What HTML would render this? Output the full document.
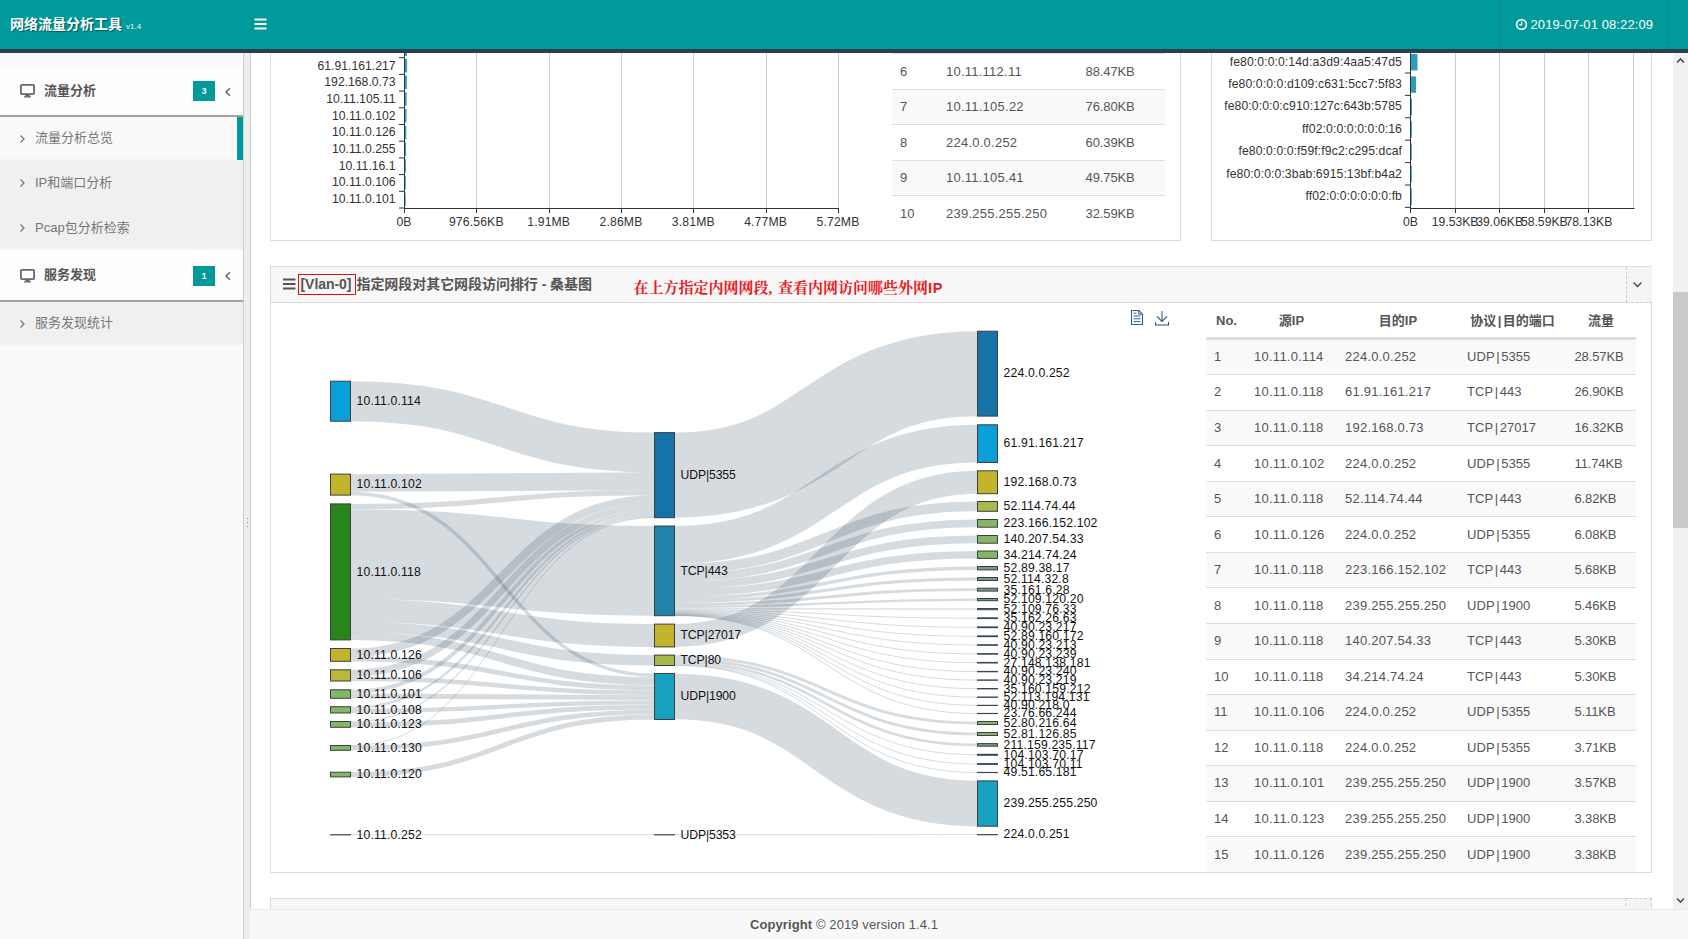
<!DOCTYPE html>
<html lang="zh-CN"><head><meta charset="utf-8"><title>网络流量分析工具</title>
<style>
*{box-sizing:border-box}
html,body{margin:0;padding:0}
body{width:1688px;height:939px;overflow:hidden;position:relative;background:#fff;font-family:"Liberation Sans","Noto Sans CJK SC",sans-serif;font-size:13px;color:#555}
.abs{position:absolute}
#hdr{left:0;top:0;width:1688px;height:53px;background:#019a9a;border-bottom:4px solid #2b3e50;z-index:10}
#hdr .title{left:10px;top:14px;color:#fff;font-weight:bold;font-size:14px;line-height:20px;text-shadow:1px 1px 1px rgba(0,0,0,.45);white-space:nowrap}
#hdr .title small{font-weight:normal;font-size:8px;margin-left:4px;color:#e8f4f4;text-shadow:none}
#side{left:0;top:53px;width:243px;height:886px;background:#fafafa}
.mh{left:0;width:243px;background:#fdfdfd;border-bottom:2px solid #a2a2a2;font-weight:bold;color:#555;font-size:13px}
.mh .t{left:44px;white-space:nowrap}
.badge{left:193px;width:22px;height:20px;background:#019a9a;color:#fff;font-size:8.5px;font-weight:bold;text-align:center;line-height:21px}
.mi{left:0;width:243px;background:#f0f0f0;color:#777;font-size:13px;border-bottom:1px solid #f4f4f4}
.mi .t{left:35px;white-space:nowrap}
#split{left:243px;top:53px;width:8px;z-index:3;height:886px;background:#eceeed;border-left:1px solid #cdcdcd;border-right:1px solid #cfcfcf}
#main{left:250px;top:53px;width:1423px;height:856px;overflow:hidden;background:#fff}
.panel{border:1px solid #ddd;background:#fff}
.tr{position:absolute;left:0;width:273px;border-top:1px solid #ddd;color:#555;font-size:13px}
.tr span{position:absolute;top:calc(50% + .6px);transform:translateY(-50%);white-space:nowrap;line-height:16px;letter-spacing:.07px}
.tr2{position:absolute;left:956px;width:430px;border-top:1px solid #ddd;color:#555;font-size:13px}
.tr2 span{position:absolute;top:50%;transform:translateY(-50%);white-space:nowrap;line-height:16px;letter-spacing:.07px}
.tr2 i{font-style:normal;margin:0 1.5px}
.th{position:absolute;font-weight:bold;color:#555;font-size:13px;white-space:nowrap;line-height:16px;transform:translateX(-50%)}
#foot{left:250px;top:909px;letter-spacing:.1px;width:1438px;padding-right:250px;height:30px;background:#f8f8f8;border-top:1px solid #e7eaec;text-align:center;font-size:13px;color:#555;line-height:30px;z-index:5}
#sb{left:1673px;top:53px;width:15px;height:856px;background:#f1f1f1}
</style></head><body>

<div id="hdr" class="abs">
 <div class="title abs">网络流量分析工具<small>v1.4</small></div>
 <svg class="abs" style="left:254px;top:18px" width="14" height="12" viewBox="0 0 14 12"><path d="M0.5 1.5h12M0.5 6h12M0.5 10.5h12" stroke="#fff" stroke-width="2"/></svg>
 <div class="abs" style="left:1500px;top:0;width:1px;height:49px;background:#1b7fb0"></div>
 <div class="abs" style="left:1668px;top:0;width:1px;height:49px;background:#1b7fb0"></div>
 <svg class="abs" style="left:1515px;top:18px" width="13" height="13" viewBox="0 0 13 13"><circle cx="6.5" cy="6.5" r="4.9" fill="none" stroke="#fff" stroke-width="1.7"/><path d="M6.7 3.6v3.2H4.2" fill="none" stroke="#fff" stroke-width="1.2"/></svg>
 <div class="abs" style="left:1530.5px;top:17px;color:#fff;font-size:13px;line-height:16px;letter-spacing:.1px;white-space:nowrap">2019-07-01 08:22:09</div>
</div>

<div id="side" class="abs">
 <div class="mh abs" style="top:13px;height:51px">
  <svg class="abs" style="left:20px;top:18px" width="15" height="14" viewBox="0 0 15 14"><rect x="0.9" y="0.9" width="13.2" height="9.2" rx="1" fill="none" stroke="#666" stroke-width="1.8"/><path d="M5.5 10.5h4l.6 2.2H4.9z" fill="#666"/><rect x="4" y="12.3" width="7" height="1.2" fill="#666"/></svg>
  <span class="t abs" style="top:16px;line-height:18px">流量分析</span>
  <div class="badge abs" style="top:15px">3</div>
  <svg class="abs" style="left:224px;top:21px" width="8" height="10" viewBox="0 0 8 10"><path d="M6 1.2L2 5l4 3.8" fill="none" stroke="#666" stroke-width="1.5"/></svg>
 </div>
 <div class="mi abs" style="top:64px;height:43px;background:#f9f9f9">
  <svg class="abs" style="left:19px;top:17px" width="7" height="10" viewBox="0 0 7 10"><path d="M1.5 1.5L5 5 1.5 8.5" fill="none" stroke="#777" stroke-width="1.3"/></svg>
  <span class="t abs" style="top:12px;line-height:18px">流量分析总览</span>
  <div class="abs" style="left:237px;top:0;width:6px;height:43px;background:#019a9a"></div>
 </div>
 <div class="mi abs" style="top:107px;height:45px">
  <svg class="abs" style="left:19px;top:18px" width="7" height="10" viewBox="0 0 7 10"><path d="M1.5 1.5L5 5 1.5 8.5" fill="none" stroke="#777" stroke-width="1.3"/></svg>
  <span class="t abs" style="top:14px;line-height:18px">IP和端口分析</span>
 </div>
 <div class="mi abs" style="top:152px;height:45px">
  <svg class="abs" style="left:19px;top:18px" width="7" height="10" viewBox="0 0 7 10"><path d="M1.5 1.5L5 5 1.5 8.5" fill="none" stroke="#777" stroke-width="1.3"/></svg>
  <span class="t abs" style="top:14px;line-height:18px">Pcap包分析检索</span>
 </div>
 <div class="mh abs" style="top:197px;height:52px">
  <svg class="abs" style="left:20px;top:19px" width="15" height="14" viewBox="0 0 15 14"><rect x="0.9" y="0.9" width="13.2" height="9.2" rx="1" fill="none" stroke="#666" stroke-width="1.8"/><path d="M5.5 10.5h4l.6 2.2H4.9z" fill="#666"/><rect x="4" y="12.3" width="7" height="1.2" fill="#666"/></svg>
  <span class="t abs" style="top:16px;line-height:18px">服务发现</span>
  <div class="badge abs" style="top:16px">1</div>
  <svg class="abs" style="left:224px;top:21px" width="8" height="10" viewBox="0 0 8 10"><path d="M6 1.2L2 5l4 3.8" fill="none" stroke="#666" stroke-width="1.5"/></svg>
 </div>
 <div class="mi abs" style="top:249px;height:43px">
  <svg class="abs" style="left:19px;top:17px" width="7" height="10" viewBox="0 0 7 10"><path d="M1.5 1.5L5 5 1.5 8.5" fill="none" stroke="#777" stroke-width="1.3"/></svg>
  <span class="t abs" style="top:12px;line-height:18px">服务发现统计</span>
 </div>
</div>
<div id="split" class="abs"><div class="abs" style="left:2.5px;top:464.5px;width:1.6px;height:1.6px;background:#8a8d92"></div><div class="abs" style="left:2.5px;top:468.5px;width:1.6px;height:1.6px;background:#8a8d92"></div><div class="abs" style="left:2.5px;top:472.5px;width:1.6px;height:1.6px;background:#8a8d92"></div></div>

<div id="main" class="abs">
 <!-- coordinates inside #main: x-250, y-53 -->
 <div class="panel abs" style="left:20px;top:-40px;width:911px;height:228px">
  <div class="abs" style="left:0;top:39px;width:600px;height:187px"><svg width="600" height="187" viewBox="271 53 600 187" style="position:absolute;left:0;top:0">
<line x1="476.5" y1="53" x2="476.5" y2="208" stroke="#ccc" stroke-width="1"/>
<line x1="549.5" y1="53" x2="549.5" y2="208" stroke="#ccc" stroke-width="1"/>
<line x1="621.5" y1="53" x2="621.5" y2="208" stroke="#ccc" stroke-width="1"/>
<line x1="693.5" y1="53" x2="693.5" y2="208" stroke="#ccc" stroke-width="1"/>
<line x1="766.5" y1="53" x2="766.5" y2="208" stroke="#ccc" stroke-width="1"/>
<line x1="838.5" y1="53" x2="838.5" y2="208" stroke="#ccc" stroke-width="1"/>
<rect x="404" y="53" width="3" height="3" fill="#2f9fc4"/>
<rect x="404.5" y="58.9" width="2.6" height="13.4" fill="#2f9fc4"/>
<rect x="404.5" y="75.6" width="2.4" height="13.4" fill="#2f9fc4"/>
<rect x="404.5" y="92.3" width="2.2" height="13.4" fill="#2f9fc4"/>
<rect x="404.5" y="109.0" width="2.0" height="13.4" fill="#2f9fc4"/>
<rect x="404.5" y="125.7" width="1.8" height="13.4" fill="#2f9fc4"/>
<rect x="404.5" y="142.4" width="1.6" height="13.4" fill="#2f9fc4"/>
<rect x="404.5" y="159.1" width="1.4" height="13.4" fill="#2f9fc4"/>
<rect x="404.5" y="175.8" width="1.3" height="13.4" fill="#2f9fc4"/>
<rect x="404.5" y="192.5" width="1.2" height="13.4" fill="#2f9fc4"/>
<line x1="404.5" y1="53" x2="404.5" y2="208.5" stroke="#333"/>
<line x1="404" y1="208.5" x2="839" y2="208.5" stroke="#333"/>
<line x1="399" y1="57.7" x2="404" y2="57.7" stroke="#333"/>
<line x1="399" y1="74.4" x2="404" y2="74.4" stroke="#333"/>
<line x1="399" y1="91.1" x2="404" y2="91.1" stroke="#333"/>
<line x1="399" y1="107.8" x2="404" y2="107.8" stroke="#333"/>
<line x1="399" y1="124.5" x2="404" y2="124.5" stroke="#333"/>
<line x1="399" y1="141.2" x2="404" y2="141.2" stroke="#333"/>
<line x1="399" y1="157.9" x2="404" y2="157.9" stroke="#333"/>
<line x1="399" y1="174.6" x2="404" y2="174.6" stroke="#333"/>
<line x1="399" y1="191.3" x2="404" y2="191.3" stroke="#333"/>
<line x1="399" y1="208.0" x2="404" y2="208.0" stroke="#333"/>
<line x1="404.5" y1="208" x2="404.5" y2="213" stroke="#333"/>
<line x1="476.5" y1="208" x2="476.5" y2="213" stroke="#333"/>
<line x1="549.5" y1="208" x2="549.5" y2="213" stroke="#333"/>
<line x1="621.5" y1="208" x2="621.5" y2="213" stroke="#333"/>
<line x1="693.5" y1="208" x2="693.5" y2="213" stroke="#333"/>
<line x1="766.5" y1="208" x2="766.5" y2="213" stroke="#333"/>
<line x1="838.5" y1="208" x2="838.5" y2="213" stroke="#333"/>
<g font-family='"Liberation Sans",sans-serif' font-size="12.2" fill="#333">
<text x="395.5" y="69.5" text-anchor="end">61.91.161.217</text>
<text x="395.5" y="86.2" text-anchor="end">192.168.0.73</text>
<text x="395.5" y="102.8" text-anchor="end">10.11.105.11</text>
<text x="395.5" y="119.5" text-anchor="end">10.11.0.102</text>
<text x="395.5" y="136.2" text-anchor="end">10.11.0.126</text>
<text x="395.5" y="152.9" text-anchor="end">10.11.0.255</text>
<text x="395.5" y="169.6" text-anchor="end">10.11.16.1</text>
<text x="395.5" y="186.3" text-anchor="end">10.11.0.106</text>
<text x="395.5" y="203.1" text-anchor="end">10.11.0.101</text>
<text x="404.0" y="226.2" text-anchor="middle" letter-spacing="0.15">0B</text>
<text x="476.3" y="226.2" text-anchor="middle" letter-spacing="0.15">976.56KB</text>
<text x="548.7" y="226.2" text-anchor="middle" letter-spacing="0.15">1.91MB</text>
<text x="621.0" y="226.2" text-anchor="middle" letter-spacing="0.15">2.86MB</text>
<text x="693.3" y="226.2" text-anchor="middle" letter-spacing="0.15">3.81MB</text>
<text x="765.6" y="226.2" text-anchor="middle" letter-spacing="0.15">4.77MB</text>
<text x="838.0" y="226.2" text-anchor="middle" letter-spacing="0.15">5.72MB</text>
</g></svg></div>
  <div class="abs" style="left:621px;top:39px;width:273px;height:187px">
<div class="tr" style="top:0.4px;height:35.5px;background:#fff"><span style="left:8px">6</span><span style="left:54px;letter-spacing:.24px">10.11.112.11</span><span style="left:193.6px;letter-spacing:-.12px">88.47KB</span></div>
<div class="tr" style="top:35.9px;height:35.0px;background:#f9f9f9"><span style="left:8px">7</span><span style="left:54px;letter-spacing:.24px">10.11.105.22</span><span style="left:193.6px;letter-spacing:-.12px">76.80KB</span></div>
<div class="tr" style="top:70.9px;height:36.0px;background:#fff"><span style="left:8px">8</span><span style="left:54px;letter-spacing:.24px">224.0.0.252</span><span style="left:193.6px;letter-spacing:-.12px">60.39KB</span></div>
<div class="tr" style="top:106.9px;height:35.0px;background:#f9f9f9"><span style="left:8px">9</span><span style="left:54px;letter-spacing:.24px">10.11.105.41</span><span style="left:193.6px;letter-spacing:-.12px">49.75KB</span></div>
<div class="tr" style="top:141.9px;height:36.5px;background:#fff"><span style="left:8px">10</span><span style="left:54px;letter-spacing:.24px">239.255.255.250</span><span style="left:193.6px;letter-spacing:-.12px">32.59KB</span></div>
  </div>
 </div>
 <div class="panel abs" style="left:961px;top:-40px;width:441px;height:228px">
  <div class="abs" style="left:0;top:39px;width:439px;height:187px"><svg width="439" height="187" viewBox="1212 53 439 187" style="position:absolute;left:0;top:0">
<line x1="1455.5" y1="53" x2="1455.5" y2="208" stroke="#ccc" stroke-width="1"/>
<line x1="1499.5" y1="53" x2="1499.5" y2="208" stroke="#ccc" stroke-width="1"/>
<line x1="1544.5" y1="53" x2="1544.5" y2="208" stroke="#ccc" stroke-width="1"/>
<line x1="1588.5" y1="53" x2="1588.5" y2="208" stroke="#ccc" stroke-width="1"/>
<line x1="1633.5" y1="53" x2="1633.5" y2="208" stroke="#ccc" stroke-width="1"/>
<rect x="1411" y="54.0" width="6.5" height="16.4" fill="#2a9fb9"/>
<rect x="1411" y="76.4" width="5.0" height="16.4" fill="#2a9fb9"/>
<rect x="1411" y="98.8" width="1.0" height="16.4" fill="#2a9fb9"/>
<rect x="1411" y="121.2" width="0.9" height="16.4" fill="#2a9fb9"/>
<rect x="1411" y="143.6" width="0.8" height="16.4" fill="#2a9fb9"/>
<rect x="1411" y="166.0" width="0.8" height="16.4" fill="#2a9fb9"/>
<rect x="1411" y="188.4" width="0.8" height="16.4" fill="#2a9fb9"/>
<line x1="1410.5" y1="53" x2="1410.5" y2="208.5" stroke="#333"/>
<line x1="1410" y1="208.5" x2="1634.5" y2="208.5" stroke="#333"/>
<line x1="1405" y1="73.0" x2="1410" y2="73.0" stroke="#333"/>
<line x1="1405" y1="95.4" x2="1410" y2="95.4" stroke="#333"/>
<line x1="1405" y1="117.8" x2="1410" y2="117.8" stroke="#333"/>
<line x1="1405" y1="140.2" x2="1410" y2="140.2" stroke="#333"/>
<line x1="1405" y1="162.6" x2="1410" y2="162.6" stroke="#333"/>
<line x1="1405" y1="185.0" x2="1410" y2="185.0" stroke="#333"/>
<line x1="1405" y1="207.4" x2="1410" y2="207.4" stroke="#333"/>
<line x1="1410.5" y1="208" x2="1410.5" y2="213" stroke="#333"/>
<line x1="1455.5" y1="208" x2="1455.5" y2="213" stroke="#333"/>
<line x1="1499.5" y1="208" x2="1499.5" y2="213" stroke="#333"/>
<line x1="1544.5" y1="208" x2="1544.5" y2="213" stroke="#333"/>
<line x1="1588.5" y1="208" x2="1588.5" y2="213" stroke="#333"/>
<g font-family='"Liberation Sans",sans-serif' font-size="12.2" fill="#333">
<text x="1402" y="65.6" text-anchor="end" letter-spacing="0.1">fe80:0:0:0:14d:a3d9:4aa5:47d5</text>
<text x="1402" y="88.0" text-anchor="end" letter-spacing="0.1">fe80:0:0:0:d109:c631:5cc7:5f83</text>
<text x="1402" y="110.4" text-anchor="end" letter-spacing="0.1">fe80:0:0:0:c910:127c:643b:5785</text>
<text x="1402" y="132.8" text-anchor="end" letter-spacing="0.1">ff02:0:0:0:0:0:0:16</text>
<text x="1402" y="155.2" text-anchor="end" letter-spacing="0.1">fe80:0:0:0:f59f:f9c2:c295:dcaf</text>
<text x="1402" y="177.6" text-anchor="end" letter-spacing="0.1">fe80:0:0:0:3bab:6915:13bf:b4a2</text>
<text x="1402" y="200.0" text-anchor="end" letter-spacing="0.1">ff02:0:0:0:0:0:0:fb</text>
<text x="1410.5" y="226.2" text-anchor="middle">0B</text>
<text x="1455.1" y="226.2" text-anchor="middle">19.53KB</text>
<text x="1499.7" y="226.2" text-anchor="middle">39.06KB</text>
<text x="1544.3" y="226.2" text-anchor="middle">58.59KB</text>
<text x="1588.9" y="226.2" text-anchor="middle">78.13KB</text>
</g></svg></div>
 </div>

 <div class="panel abs" style="left:20px;top:213px;width:1382px;height:607px">
  <div class="abs" style="left:0;top:0;width:1380px;height:36px;background:#f7f7f7;border-bottom:1px solid #ddd"></div>
  <svg class="abs" style="left:11.5px;top:11px" width="13" height="12" viewBox="0 0 13 12"><path d="M0 1.5h12.5M0 6h12.5M0 10.5h12.5" stroke="#555" stroke-width="1.9"/></svg>
  <div class="abs" style="left:27px;top:7px;width:58px;height:21px;border:1px solid #e0101a"></div>
  <div class="abs" style="left:29.5px;top:7px;font-size:14px;font-weight:bold;color:#555;line-height:20px;white-space:nowrap;letter-spacing:-.05px">[Vlan-0]<span style="margin-left:5px">指定网段对其它网段访问排行 - 桑基图</span></div>
  <div class="abs" style="left:362.5px;top:11px;font-family:'Liberation Serif','Noto Serif CJK SC',serif;font-size:15px;font-weight:bold;color:#ea1a22;line-height:20px;white-space:nowrap;word-spacing:2px">在上方指定内网网段, 查看内网访问哪些外网<span style="font-family:'Liberation Sans',sans-serif;font-size:14.5px;letter-spacing:.6px">IP</span></div>
  <div class="abs" style="left:1355px;top:0;width:26px;height:36px;background:#f3f4f5;border-left:1px dashed #ccc;border-bottom:1px dashed #ccc"></div>
  <svg class="abs" style="left:1361px;top:14px" width="11" height="8" viewBox="0 0 11 8"><path d="M1.5 1.5L5.5 5.5 9.5 1.5" fill="none" stroke="#444" stroke-width="1.3"/></svg>
 </div>
 <div class="abs" style="left:20px;top:249px;width:936px;height:570px"><svg width="936" height="570" viewBox="270 302 936 570" style="position:absolute;left:0;top:0;overflow:hidden">
<g fill="none" stroke="#34495e" stroke-opacity="0.2">
<path d="M350.5,401.20C502.5,401.20 502.5,452.46 654.5,452.46" stroke-width="39.86"/>
<path d="M350.5,483.00C502.5,483.00 502.5,481.16 654.5,481.16" stroke-width="17.74"/>
<path d="M350.5,493.50C502.5,493.50 502.5,675.24 654.5,675.24" stroke-width="3.34"/>
<path d="M350.5,506.51C502.5,506.51 502.5,492.58 654.5,492.58" stroke-width="5.19"/>
<path d="M350.5,554.06C502.5,554.06 502.5,570.85 654.5,570.85" stroke-width="89.80"/>
<path d="M350.5,610.44C502.5,610.44 502.5,635.50 654.5,635.50" stroke-width="22.83"/>
<path d="M350.5,627.07C502.5,627.07 502.5,660.30 654.5,660.30" stroke-width="10.41"/>
<path d="M350.5,636.09C502.5,636.09 502.5,681.13 654.5,681.13" stroke-width="7.95"/>
<path d="M350.5,652.60C502.5,652.60 502.5,499.23 654.5,499.23" stroke-width="8.17"/>
<path d="M350.5,659.00C502.5,659.00 502.5,687.78 654.5,687.78" stroke-width="4.81"/>
<path d="M350.5,673.20C502.5,673.20 502.5,506.68 654.5,506.68" stroke-width="6.78"/>
<path d="M350.5,678.80C502.5,678.80 502.5,692.68 654.5,692.68" stroke-width="4.60"/>
<path d="M350.5,691.70C502.5,691.70 502.5,511.94 654.5,511.94" stroke-width="3.79"/>
<path d="M350.5,695.95C502.5,695.95 502.5,697.64 654.5,697.64" stroke-width="4.91"/>
<path d="M350.5,707.85C502.5,707.85 502.5,514.97 654.5,514.97" stroke-width="2.29"/>
<path d="M350.5,711.00C502.5,711.00 502.5,702.39 654.5,702.39" stroke-width="4.18"/>
<path d="M350.5,722.10C502.5,722.10 502.5,516.71 654.5,516.71" stroke-width="1.20"/>
<path d="M350.5,725.00C502.5,725.00 502.5,707.07 654.5,707.07" stroke-width="4.81"/>
<path d="M350.5,745.70C502.5,745.70 502.5,517.50 654.5,517.50" stroke-width="1.00"/>
<path d="M350.5,748.10C502.5,748.10 502.5,711.98 654.5,711.98" stroke-width="4.60"/>
<path d="M350.5,774.55C502.5,774.55 502.5,716.94 654.5,716.94" stroke-width="4.91"/>
<path d="M350.5,834.70C502.5,834.70 502.5,834.70 654.5,834.70" stroke-width="1.00"/>
<path d="M674.5,475.15C826.0,475.15 826.0,373.65 977.5,373.65" stroke-width="85.00"/>
<path d="M674.5,544.93C826.0,544.93 826.0,443.65 977.5,443.65" stroke-width="37.78"/>
<path d="M674.5,568.79C826.0,568.79 826.0,506.40 977.5,506.40" stroke-width="9.82"/>
<path d="M674.5,577.58C826.0,577.58 826.0,523.35 977.5,523.35" stroke-width="7.72"/>
<path d="M674.5,585.31C826.0,585.31 826.0,539.35 977.5,539.35" stroke-width="7.72"/>
<path d="M674.5,592.90C826.0,592.90 826.0,554.70 977.5,554.70" stroke-width="7.42"/>
<path d="M674.5,598.32C826.0,598.32 826.0,568.20 977.5,568.20" stroke-width="3.41"/>
<path d="M674.5,601.54C826.0,601.54 826.0,579.00 977.5,579.00" stroke-width="3.01"/>
<path d="M674.5,604.50C826.0,604.50 826.0,589.65 977.5,589.65" stroke-width="2.91"/>
<path d="M674.5,607.06C826.0,607.06 826.0,599.60 977.5,599.60" stroke-width="2.20"/>
<path d="M674.5,608.77C826.0,608.77 826.0,609.10 977.5,609.10" stroke-width="1.20"/>
<path d="M674.5,609.77C826.0,609.77 826.0,618.20 977.5,618.20" stroke-width="1.00"/>
<path d="M674.5,610.58C826.0,610.58 826.0,627.30 977.5,627.30" stroke-width="1.00"/>
<path d="M674.5,611.38C826.0,611.38 826.0,636.30 977.5,636.30" stroke-width="1.00"/>
<path d="M674.5,612.08C826.0,612.08 826.0,645.00 977.5,645.00" stroke-width="1.00"/>
<path d="M674.5,612.69C826.0,612.69 826.0,653.90 977.5,653.90" stroke-width="1.00"/>
<path d="M674.5,613.29C826.0,613.29 826.0,662.70 977.5,662.70" stroke-width="1.00"/>
<path d="M674.5,613.79C826.0,613.79 826.0,671.60 977.5,671.60" stroke-width="1.00"/>
<path d="M674.5,614.19C826.0,614.19 826.0,680.10 977.5,680.10" stroke-width="1.00"/>
<path d="M674.5,614.60C826.0,614.60 826.0,688.70 977.5,688.70" stroke-width="1.00"/>
<path d="M674.5,615.00C826.0,615.00 826.0,697.20 977.5,697.20" stroke-width="1.00"/>
<path d="M674.5,615.32C826.0,615.32 826.0,705.40 977.5,705.40" stroke-width="1.00"/>
<path d="M674.5,615.57C826.0,615.57 826.0,713.50 977.5,713.50" stroke-width="1.00"/>
<path d="M674.5,635.50C826.0,635.50 826.0,482.25 977.5,482.25" stroke-width="22.85"/>
<path d="M674.5,656.56C826.0,656.56 826.0,723.00 977.5,723.00" stroke-width="2.96"/>
<path d="M674.5,659.49C826.0,659.49 826.0,734.00 977.5,734.00" stroke-width="2.96"/>
<path d="M674.5,662.23C826.0,662.23 826.0,744.90 977.5,744.90" stroke-width="2.57"/>
<path d="M674.5,663.99C826.0,663.99 826.0,754.80 977.5,754.80" stroke-width="1.00"/>
<path d="M674.5,664.87C826.0,664.87 826.0,764.00 977.5,764.00" stroke-width="1.00"/>
<path d="M674.5,665.38C826.0,665.38 826.0,772.50 977.5,772.50" stroke-width="1.00"/>
<path d="M674.5,696.50C826.0,696.50 826.0,803.55 977.5,803.55" stroke-width="45.65"/>
<path d="M674.5,834.70C826.0,834.70 826.0,834.60 977.5,834.60" stroke-width="1.00"/>
</g>
<g stroke-width="1">
<rect x="330.5" y="381.20" width="20" height="40.00" fill="#0a9fd8" stroke="#3c3f42"/>
<rect x="330.5" y="474.10" width="20" height="21.00" fill="#c3b52b" stroke="#3c3f42"/>
<rect x="330.5" y="503.90" width="20" height="136.00" fill="#2a841c" stroke="#3c3f42"/>
<rect x="330.5" y="648.50" width="20" height="12.80" fill="#c3b52b" stroke="#3c3f42"/>
<rect x="330.5" y="669.80" width="20" height="11.20" fill="#b9b838" stroke="#3c3f42"/>
<rect x="330.5" y="689.80" width="20" height="8.50" fill="#84b668" stroke="#3c3f42"/>
<rect x="330.5" y="706.70" width="20" height="6.30" fill="#84b668" stroke="#3c3f42"/>
<rect x="330.5" y="721.50" width="20" height="5.80" fill="#84b668" stroke="#3c3f42"/>
<rect x="330.5" y="745.50" width="20" height="4.80" fill="#84b668" stroke="#3c3f42"/>
<rect x="330.5" y="772.20" width="20" height="4.70" fill="#84b668" stroke="#3c3f42"/>
<rect x="330.5" y="834.70" width="20" height="0.20" fill="#34495e" stroke="#3c4752"/>
<rect x="654.5" y="432.60" width="20" height="85.10" fill="#1673a7" stroke="#3c3f42"/>
<rect x="654.5" y="526.00" width="20" height="89.70" fill="#2283a8" stroke="#3c3f42"/>
<rect x="654.5" y="624.10" width="20" height="22.80" fill="#c3b52b" stroke="#3c3f42"/>
<rect x="654.5" y="655.10" width="20" height="10.40" fill="#a8b84a" stroke="#3c3f42"/>
<rect x="654.5" y="673.50" width="20" height="46.00" fill="#17a0bf" stroke="#3c3f42"/>
<rect x="654.5" y="834.70" width="20" height="0.20" fill="#34495e" stroke="#3c4752"/>
<rect x="977.5" y="331.20" width="20" height="84.90" fill="#1673a7" stroke="#3c3f42"/>
<rect x="977.5" y="424.80" width="20" height="37.70" fill="#0a9fd8" stroke="#3c3f42"/>
<rect x="977.5" y="470.80" width="20" height="22.90" fill="#c3b52b" stroke="#3c3f42"/>
<rect x="977.5" y="501.50" width="20" height="9.80" fill="#a8b84a" stroke="#3c3f42"/>
<rect x="977.5" y="519.50" width="20" height="7.70" fill="#84b668" stroke="#3c3f42"/>
<rect x="977.5" y="535.50" width="20" height="7.70" fill="#84b668" stroke="#3c3f42"/>
<rect x="977.5" y="551.00" width="20" height="7.40" fill="#84b668" stroke="#3c3f42"/>
<rect x="977.5" y="566.50" width="20" height="3.40" fill="#6f9f86" stroke="#3c3f42"/>
<rect x="977.5" y="577.50" width="20" height="3.00" fill="#6f9f86" stroke="#3c3f42"/>
<rect x="977.5" y="588.20" width="20" height="2.90" fill="#6f9f86" stroke="#3c3f42"/>
<rect x="977.5" y="598.50" width="20" height="2.20" fill="#6f9f86" stroke="#3c3f42"/>
<rect x="977.5" y="608.50" width="20" height="1.20" fill="#6f9f86" stroke="#3c4752"/>
<rect x="977.5" y="617.80" width="20" height="0.80" fill="#6f9f86" stroke="#3c4752"/>
<rect x="977.5" y="626.90" width="20" height="0.80" fill="#6f9f86" stroke="#3c4752"/>
<rect x="977.5" y="635.90" width="20" height="0.80" fill="#6f9f86" stroke="#3c4752"/>
<rect x="977.5" y="644.70" width="20" height="0.60" fill="#6f9f86" stroke="#3c4752"/>
<rect x="977.5" y="653.60" width="20" height="0.60" fill="#6f9f86" stroke="#3c4752"/>
<rect x="977.5" y="662.40" width="20" height="0.60" fill="#6f9f86" stroke="#3c4752"/>
<rect x="977.5" y="671.40" width="20" height="0.40" fill="#6f9f86" stroke="#3c4752"/>
<rect x="977.5" y="679.90" width="20" height="0.40" fill="#6f9f86" stroke="#3c4752"/>
<rect x="977.5" y="688.50" width="20" height="0.40" fill="#6f9f86" stroke="#3c4752"/>
<rect x="977.5" y="697.00" width="20" height="0.40" fill="#6f9f86" stroke="#3c4752"/>
<rect x="977.5" y="705.30" width="20" height="0.20" fill="#6f9f86" stroke="#3c4752"/>
<rect x="977.5" y="713.40" width="20" height="0.20" fill="#6f9f86" stroke="#3c4752"/>
<rect x="977.5" y="721.50" width="20" height="3.00" fill="#84b668" stroke="#3c3f42"/>
<rect x="977.5" y="732.50" width="20" height="3.00" fill="#84b668" stroke="#3c3f42"/>
<rect x="977.5" y="743.60" width="20" height="2.60" fill="#6f9f86" stroke="#3c3f42"/>
<rect x="977.5" y="754.30" width="20" height="1.00" fill="#6f9f86" stroke="#3c4752"/>
<rect x="977.5" y="763.60" width="20" height="0.80" fill="#6f9f86" stroke="#3c4752"/>
<rect x="977.5" y="772.40" width="20" height="0.20" fill="#6f9f86" stroke="#3c4752"/>
<rect x="977.5" y="780.90" width="20" height="45.30" fill="#17a0bf" stroke="#3c3f42"/>
<rect x="977.5" y="834.60" width="20" height="0.20" fill="#34495e" stroke="#3c4752"/>
</g>
<g font-family='"Liberation Sans",sans-serif' font-size="12.2" fill="#111">
<text x="356.5" y="405.0" letter-spacing="0.17">10.11.0.114</text>
<text x="356.5" y="488.4" letter-spacing="0.17">10.11.0.102</text>
<text x="356.5" y="575.7" letter-spacing="0.17">10.11.0.118</text>
<text x="356.5" y="658.7" letter-spacing="0.17">10.11.0.126</text>
<text x="356.5" y="679.2" letter-spacing="0.17">10.11.0.106</text>
<text x="356.5" y="697.8" letter-spacing="0.17">10.11.0.101</text>
<text x="356.5" y="713.6" letter-spacing="0.17">10.11.0.108</text>
<text x="356.5" y="728.2" letter-spacing="0.17">10.11.0.123</text>
<text x="356.5" y="751.7" letter-spacing="0.17">10.11.0.130</text>
<text x="356.5" y="778.3" letter-spacing="0.17">10.11.0.120</text>
<text x="356.5" y="838.5" letter-spacing="0.17">10.11.0.252</text>
<text x="680.5" y="479.0" letter-spacing="-0.1">UDP|5355</text>
<text x="680.5" y="574.6" letter-spacing="-0.1">TCP|443</text>
<text x="680.5" y="639.3" letter-spacing="-0.1">TCP|27017</text>
<text x="680.5" y="664.1" letter-spacing="-0.1">TCP|80</text>
<text x="680.5" y="700.3" letter-spacing="-0.1">UDP|1900</text>
<text x="680.5" y="838.5" letter-spacing="-0.1">UDP|5353</text>
<text x="1003.5" y="377.4" letter-spacing="0.17">224.0.0.252</text>
<text x="1003.5" y="447.4" letter-spacing="0.17">61.91.161.217</text>
<text x="1003.5" y="486.1" letter-spacing="0.17">192.168.0.73</text>
<text x="1003.5" y="510.2" letter-spacing="0.17">52.114.74.44</text>
<text x="1003.5" y="527.1" letter-spacing="0.17">223.166.152.102</text>
<text x="1003.5" y="543.1" letter-spacing="0.17">140.207.54.33</text>
<text x="1003.5" y="558.5" letter-spacing="0.17">34.214.74.24</text>
<text x="1003.5" y="572.0" letter-spacing="0.17">52.89.38.17</text>
<text x="1003.5" y="582.8" letter-spacing="0.17">52.114.32.8</text>
<text x="1003.5" y="593.5" letter-spacing="0.17">35.161.6.28</text>
<text x="1003.5" y="603.4" letter-spacing="0.17">52.109.120.20</text>
<text x="1003.5" y="612.9" letter-spacing="0.17">52.109.76.33</text>
<text x="1003.5" y="622.0" letter-spacing="0.17">35.162.26.63</text>
<text x="1003.5" y="631.1" letter-spacing="0.17">40.90.23.217</text>
<text x="1003.5" y="640.1" letter-spacing="0.17">52.89.160.172</text>
<text x="1003.5" y="648.8" letter-spacing="0.17">40.90.23.213</text>
<text x="1003.5" y="657.7" letter-spacing="0.17">40.90.23.239</text>
<text x="1003.5" y="666.5" letter-spacing="0.17">27.148.138.181</text>
<text x="1003.5" y="675.4" letter-spacing="0.17">40.90.23.240</text>
<text x="1003.5" y="683.9" letter-spacing="0.17">40.90.23.219</text>
<text x="1003.5" y="692.5" letter-spacing="0.17">35.160.159.212</text>
<text x="1003.5" y="701.0" letter-spacing="0.17">52.113.194.131</text>
<text x="1003.5" y="709.2" letter-spacing="0.17">40.90.218.0</text>
<text x="1003.5" y="717.3" letter-spacing="0.17">23.76.66.244</text>
<text x="1003.5" y="726.8" letter-spacing="0.17">52.80.216.64</text>
<text x="1003.5" y="737.8" letter-spacing="0.17">52.81.126.85</text>
<text x="1003.5" y="748.7" letter-spacing="0.17">211.159.235.117</text>
<text x="1003.5" y="758.6" letter-spacing="0.17">104.103.70.17</text>
<text x="1003.5" y="767.8" letter-spacing="0.17">104.103.70.11</text>
<text x="1003.5" y="776.3" letter-spacing="0.17">49.51.65.181</text>
<text x="1003.5" y="807.3" letter-spacing="0.17">239.255.255.250</text>
<text x="1003.5" y="838.4" letter-spacing="0.17">224.0.0.251</text>
</g>
</svg></div>
 <!-- toolbox icons -->
 <svg class="abs" style="left:880px;top:256px" width="14" height="17" viewBox="0 0 14 17"><path d="M1.5 1.5h7.3l3.7 3.7v10.3h-11z" fill="#fff" stroke="#2f5f8f" stroke-width="1.1"/><path d="M8.8 1.5v3.7h3.7" fill="none" stroke="#2f5f8f" stroke-width="1"/><path d="M3.5 7h7M3.5 9.8h7M3.5 12.6h7M3.5 4.2h3" stroke="#2f5f8f" stroke-width="1"/></svg>
 <svg class="abs" style="left:904px;top:257px" width="16" height="16" viewBox="0 0 16 16"><path d="M8 1v10M3 6.5l5 5 5-5" fill="none" stroke="#2f5f8f" stroke-width="1.1"/><path d="M1.5 12v3h13v-3" fill="none" stroke="#2f4f6f" stroke-width="1.1"/></svg>

 <!-- main table -->
 <div class="abs" style="left:956px;top:284px;width:430px;height:2px;background:#ddd"></div>
 <div class="th" style="left:976.5px;top:260px">No.</div>
 <div class="th" style="left:1041.5px;top:260px">源IP</div>
 <div class="th" style="left:1148px;top:260px">目的IP</div>
 <div class="th" style="left:1262.5px;top:260px">协议<span style="margin:0 1.5px">|</span>目的端口</div>
 <div class="th" style="left:1351px;top:260px">流量</div>
<div class="tr2" style="top:285.60px;height:35.55px;background:#f9f9f9"><span style="left:8px">1</span><span style="left:48px;letter-spacing:.26px">10.11.0.114</span><span style="left:139px;letter-spacing:.24px">224.0.0.252</span><span style="left:261px">UDP<i>|</i>5355</span><span style="left:368.5px;letter-spacing:-.12px">28.57KB</span></div>
<div class="tr2" style="top:321.15px;height:35.55px;background:#fff"><span style="left:8px">2</span><span style="left:48px;letter-spacing:.26px">10.11.0.118</span><span style="left:139px;letter-spacing:.24px">61.91.161.217</span><span style="left:261px">TCP<i>|</i>443</span><span style="left:368.5px;letter-spacing:-.12px">26.90KB</span></div>
<div class="tr2" style="top:356.70px;height:35.55px;background:#f9f9f9"><span style="left:8px">3</span><span style="left:48px;letter-spacing:.26px">10.11.0.118</span><span style="left:139px;letter-spacing:.24px">192.168.0.73</span><span style="left:261px">TCP<i>|</i>27017</span><span style="left:368.5px;letter-spacing:-.12px">16.32KB</span></div>
<div class="tr2" style="top:392.25px;height:35.55px;background:#fff"><span style="left:8px">4</span><span style="left:48px;letter-spacing:.26px">10.11.0.102</span><span style="left:139px;letter-spacing:.24px">224.0.0.252</span><span style="left:261px">UDP<i>|</i>5355</span><span style="left:368.5px;letter-spacing:-.12px">11.74KB</span></div>
<div class="tr2" style="top:427.80px;height:35.55px;background:#f9f9f9"><span style="left:8px">5</span><span style="left:48px;letter-spacing:.26px">10.11.0.118</span><span style="left:139px;letter-spacing:.24px">52.114.74.44</span><span style="left:261px">TCP<i>|</i>443</span><span style="left:368.5px;letter-spacing:-.12px">6.82KB</span></div>
<div class="tr2" style="top:463.35px;height:35.55px;background:#fff"><span style="left:8px">6</span><span style="left:48px;letter-spacing:.26px">10.11.0.126</span><span style="left:139px;letter-spacing:.24px">224.0.0.252</span><span style="left:261px">UDP<i>|</i>5355</span><span style="left:368.5px;letter-spacing:-.12px">6.08KB</span></div>
<div class="tr2" style="top:498.90px;height:35.55px;background:#f9f9f9"><span style="left:8px">7</span><span style="left:48px;letter-spacing:.26px">10.11.0.118</span><span style="left:139px;letter-spacing:.24px">223.166.152.102</span><span style="left:261px">TCP<i>|</i>443</span><span style="left:368.5px;letter-spacing:-.12px">5.68KB</span></div>
<div class="tr2" style="top:534.45px;height:35.55px;background:#fff"><span style="left:8px">8</span><span style="left:48px;letter-spacing:.26px">10.11.0.118</span><span style="left:139px;letter-spacing:.24px">239.255.255.250</span><span style="left:261px">UDP<i>|</i>1900</span><span style="left:368.5px;letter-spacing:-.12px">5.46KB</span></div>
<div class="tr2" style="top:570.00px;height:35.55px;background:#f9f9f9"><span style="left:8px">9</span><span style="left:48px;letter-spacing:.26px">10.11.0.118</span><span style="left:139px;letter-spacing:.24px">140.207.54.33</span><span style="left:261px">TCP<i>|</i>443</span><span style="left:368.5px;letter-spacing:-.12px">5.30KB</span></div>
<div class="tr2" style="top:605.55px;height:35.55px;background:#fff"><span style="left:8px">10</span><span style="left:48px;letter-spacing:.26px">10.11.0.118</span><span style="left:139px;letter-spacing:.24px">34.214.74.24</span><span style="left:261px">TCP<i>|</i>443</span><span style="left:368.5px;letter-spacing:-.12px">5.30KB</span></div>
<div class="tr2" style="top:641.10px;height:35.55px;background:#f9f9f9"><span style="left:8px">11</span><span style="left:48px;letter-spacing:.26px">10.11.0.106</span><span style="left:139px;letter-spacing:.24px">224.0.0.252</span><span style="left:261px">UDP<i>|</i>5355</span><span style="left:368.5px;letter-spacing:-.12px">5.11KB</span></div>
<div class="tr2" style="top:676.65px;height:35.55px;background:#fff"><span style="left:8px">12</span><span style="left:48px;letter-spacing:.26px">10.11.0.118</span><span style="left:139px;letter-spacing:.24px">224.0.0.252</span><span style="left:261px">UDP<i>|</i>5355</span><span style="left:368.5px;letter-spacing:-.12px">3.71KB</span></div>
<div class="tr2" style="top:712.20px;height:35.55px;background:#f9f9f9"><span style="left:8px">13</span><span style="left:48px;letter-spacing:.26px">10.11.0.101</span><span style="left:139px;letter-spacing:.24px">239.255.255.250</span><span style="left:261px">UDP<i>|</i>1900</span><span style="left:368.5px;letter-spacing:-.12px">3.57KB</span></div>
<div class="tr2" style="top:747.75px;height:35.55px;background:#fff"><span style="left:8px">14</span><span style="left:48px;letter-spacing:.26px">10.11.0.123</span><span style="left:139px;letter-spacing:.24px">239.255.255.250</span><span style="left:261px">UDP<i>|</i>1900</span><span style="left:368.5px;letter-spacing:-.12px">3.38KB</span></div>
<div class="tr2" style="top:783.30px;height:35.55px;background:#f9f9f9"><span style="left:8px">15</span><span style="left:48px;letter-spacing:.26px">10.11.0.126</span><span style="left:139px;letter-spacing:.24px">239.255.255.250</span><span style="left:261px">UDP<i>|</i>1900</span><span style="left:368.5px;letter-spacing:-.12px">3.38KB</span></div>

 <!-- next panel peek -->
 <div class="panel abs" style="left:20px;top:845px;width:1382px;height:60px;background:#f7f7f7"></div>
 <div class="abs" style="left:1375px;top:845px;width:27px;height:40px;background:#f3f4f5;border:1px dashed #ccc"></div>
</div>

<div id="sb" class="abs">
 <svg class="abs" style="left:3px;top:4px" width="9" height="7" viewBox="0 0 9 7"><path d="M1 5.5L4.5 2 8 5.5" fill="none" stroke="#505050" stroke-width="1.6"/></svg>
 <div class="abs" style="left:0;top:239px;width:15px;height:236px;background:#c9cacb"></div>
 <svg class="abs" style="left:3px;top:844px" width="9" height="7" viewBox="0 0 9 7"><path d="M1 1.5L4.5 5 8 1.5" fill="none" stroke="#505050" stroke-width="1.6"/></svg>
</div>

<div id="foot" class="abs"><b>Copyright</b> © 2019 version 1.4.1</div>
</body></html>
